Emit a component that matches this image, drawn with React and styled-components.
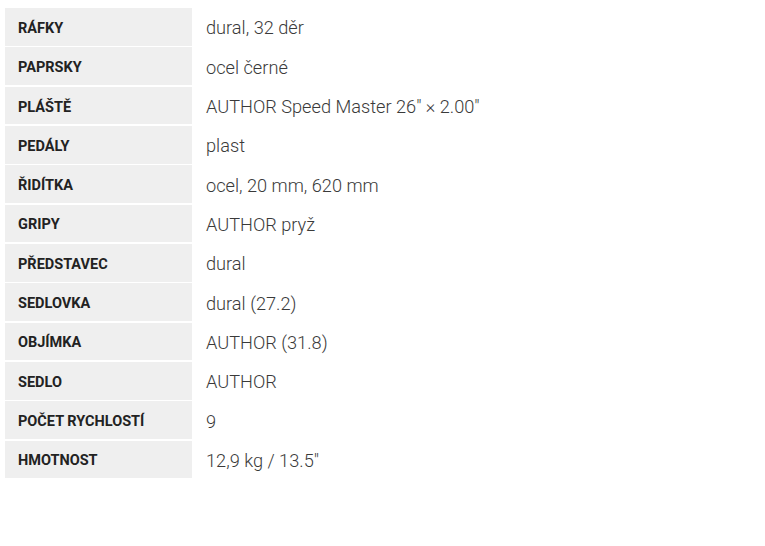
import { Fragment } from "react";
import styled, { createGlobalStyle } from "styled-components";

const GlobalStyle = createGlobalStyle`
    body {
        margin: 8px 0 0 5px;
        background: #fff;
        font-family: Roboto, "Liberation Sans", sans-serif;
    }
`;

const specs = [
    ["Ráfky", "dural, 32 děr"],
    ["Paprsky", "ocel černé"],
    ["Pláště", "AUTHOR Speed Master 26\" × 2.00\""],
    ["Pedály", "plast"],
    ["Řidítka", "ocel, 20 mm, 620 mm"],
    ["Gripy", "AUTHOR pryž"],
    ["Představec", "dural"],
    ["Sedlovka", "dural (27.2)"],
    ["Objímka", "AUTHOR (31.8)"],
    ["Sedlo", "AUTHOR"],
    ["Počet rychlostí", "9"],
    ["Hmotnost", "12,9 kg / 13.5\""],
];

const SpecTable = styled.div`
    display: grid;
    grid-template-columns: 187px 470px;
    grid-auto-rows: 37.7px;
    row-gap: 1.65px;
    column-gap: 1px;
`;

const Label = styled.div`
    display: flex;
    align-items: center;
    padding: 3px 0 0 13px;
    background: #efefef;
    color: #222;
    font-weight: 700;
    font-size: 14.5px;
    letter-spacing: 0;
    text-transform: uppercase;
`;

const Value = styled.div`
    display: flex;
    align-items: center;
    padding: 2px 0 0 13px;
    color: #3a3a3a;
    font-weight: 300;
    font-size: 18.2px;
`;

const App = () => {
    return (
        <>
            <GlobalStyle />
            <SpecTable>
                {specs.map(([label, value]) => (
                    <Fragment key={label}>
                        <Label>{label}</Label>
                        <Value>{value}</Value>
                    </Fragment>
                ))}
            </SpecTable>
        </>
    );
};

export default App;
